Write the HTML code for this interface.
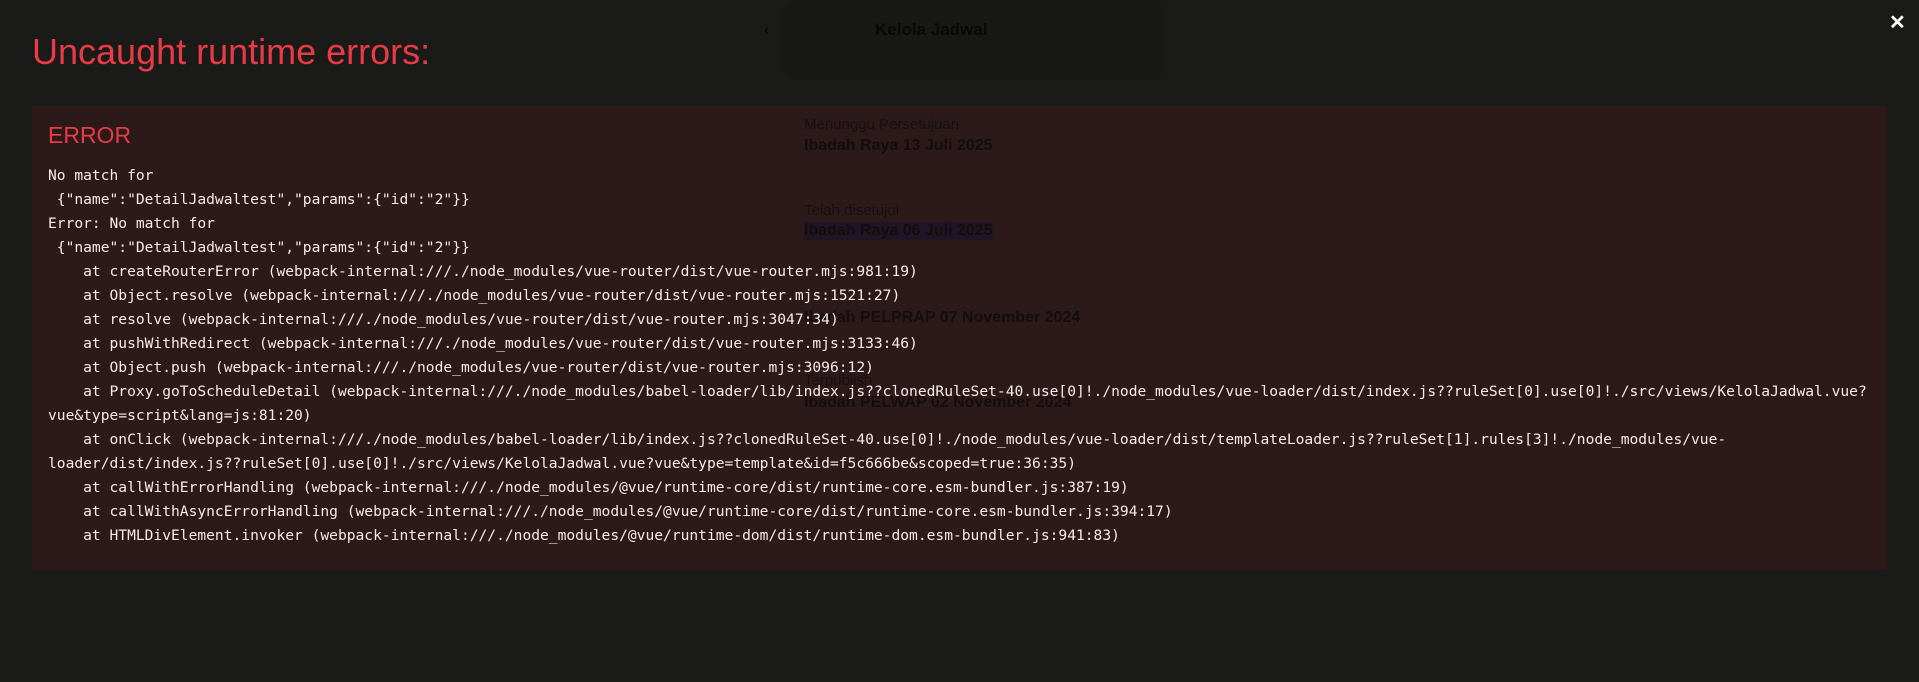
<!DOCTYPE html>
<html><head><meta charset="utf-8"><style>
html,body{margin:0;padding:0;}
body{width:1919px;height:682px;background:#1a1a18;position:relative;overflow:hidden;font-family:"Liberation Sans",sans-serif;}
.bg{position:absolute;color:#0a0909;font-family:"Liberation Sans",sans-serif;white-space:nowrap;}
.card{position:absolute;left:783px;width:380px;border-radius:10px;background:rgba(0,0,0,0.04);}
.title{position:absolute;left:32px;top:30px;font-size:36px;color:#e83b46;line-height:44px;}
.box{position:absolute;left:32px;top:106px;width:1855px;height:464px;background:#2c1a1b;}
.err{position:absolute;left:48px;top:120px;font-size:23px;color:#e83b46;line-height:30px;}
pre{position:absolute;left:48px;top:164px;margin:0;font-family:"DejaVu Sans Mono","Liberation Mono",monospace;font-size:14.6px;line-height:24px;color:#fce8e8;white-space:pre;}
.x{position:absolute;left:1889px;top:10px;color:#fff;font-size:20px;font-weight:bold;}
</style></head><body>
<div class="card" style="top:0;height:80px;"></div>
<div class="bg" style="left:764px;top:20px;font-size:17px;">‹</div>
<div class="bg" style="left:875px;top:20px;font-size:17px;font-weight:bold;">Kelola Jadwal</div>
<div class="title">Uncaught runtime errors:</div>
<div class="box"></div>
<div class="bg" style="left:804px;top:116px;font-size:15px;color:#170f10">Menunggu Persetujuan</div>
<div class="bg" style="left:804px;top:137px;font-size:16px;font-weight:bold;color:#140d0e">Ibadah Raya 13 Juli 2025</div>
<div class="bg" style="left:804px;top:202px;font-size:15px;color:#170f10">Telah disetujui</div>
<div class="bg" style="left:804px;top:222px;font-size:16px;font-weight:bold;color:#140d0e;background:#1f1526">Ibadah Raya 06 Juli 2025</div>
<div class="bg" style="left:804px;top:309px;font-size:16px;font-weight:bold;color:#140d0e">Ibadah PELPRAP 07 November 2024</div>
<div class="bg" style="left:804px;top:372px;font-size:15px;color:#170f10">Terpublish</div>
<div class="bg" style="left:804px;top:394px;font-size:16px;font-weight:bold;color:#140d0e">Ibadah PELWAP 02 November 2024</div>
<div class="err">ERROR</div>
<pre>No match for
 {"name":"DetailJadwaltest","params":{"id":"2"}}
Error: No match for
 {"name":"DetailJadwaltest","params":{"id":"2"}}
    at createRouterError (webpack-internal:///./node_modules/vue-router/dist/vue-router.mjs:981:19)
    at Object.resolve (webpack-internal:///./node_modules/vue-router/dist/vue-router.mjs:1521:27)
    at resolve (webpack-internal:///./node_modules/vue-router/dist/vue-router.mjs:3047:34)
    at pushWithRedirect (webpack-internal:///./node_modules/vue-router/dist/vue-router.mjs:3133:46)
    at Object.push (webpack-internal:///./node_modules/vue-router/dist/vue-router.mjs:3096:12)
    at Proxy.goToScheduleDetail (webpack-internal:///./node_modules/babel-loader/lib/index.js??clonedRuleSet-40.use[0]!./node_modules/vue-loader/dist/index.js??ruleSet[0].use[0]!./src/views/KelolaJadwal.vue?
vue&amp;type=script&amp;lang=js:81:20)
    at onClick (webpack-internal:///./node_modules/babel-loader/lib/index.js??clonedRuleSet-40.use[0]!./node_modules/vue-loader/dist/templateLoader.js??ruleSet[1].rules[3]!./node_modules/vue-
loader/dist/index.js??ruleSet[0].use[0]!./src/views/KelolaJadwal.vue?vue&amp;type=template&amp;id=f5c666be&amp;scoped=true:36:35)
    at callWithErrorHandling (webpack-internal:///./node_modules/@vue/runtime-core/dist/runtime-core.esm-bundler.js:387:19)
    at callWithAsyncErrorHandling (webpack-internal:///./node_modules/@vue/runtime-core/dist/runtime-core.esm-bundler.js:394:17)
    at HTMLDivElement.invoker (webpack-internal:///./node_modules/@vue/runtime-dom/dist/runtime-dom.esm-bundler.js:941:83)</pre>
<div class="x">✕</div>
</body></html>
